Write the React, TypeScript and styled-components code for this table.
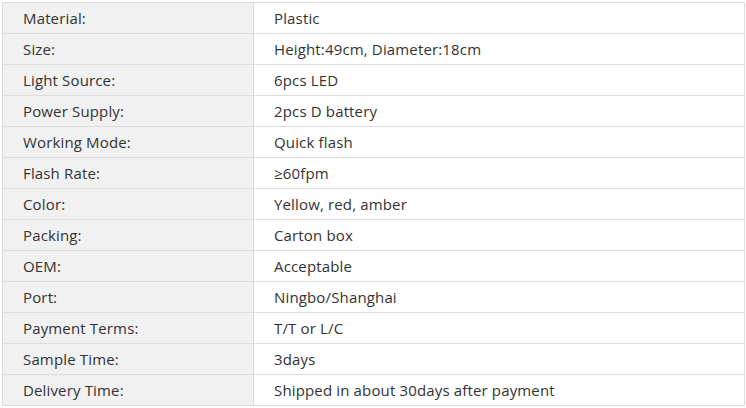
import React from "react";
import styled, { createGlobalStyle } from "styled-components";

const GlobalStyle = createGlobalStyle`
  body {
    margin: 0;
    background: #fff;
    font-family: "Open Sans", "Noto Sans", "Liberation Sans", sans-serif;
  }
`;

const Table = styled.div`
  margin: 2px 0 0 2px;
  width: 742px;
  border-top: 1px solid #dcdcdc;
  border-left: 1px solid #dcdcdc;
`;

const Row = styled.div`
  display: grid;
  grid-template-columns: 251px 1fr;
  height: 31px;
`;

const Cell = styled.div<{ $label?: boolean }>`
  display: flex;
  align-items: center;
  padding-left: 20px;
  background: ${(p) => (p.$label ? "#f1f1f1" : "#fff")};
  border-right: 1px solid #dcdcdc;
  border-bottom: 1px solid #dcdcdc;
  font-size: 15px;
  letter-spacing: 0.15px;
  color: #333;
  white-space: nowrap;
`;

const specs: [string, string][] = [
  ["Material:", "Plastic"],
  ["Size:", "Height:49cm, Diameter:18cm"],
  ["Light Source:", "6pcs LED"],
  ["Power Supply:", "2pcs D battery"],
  ["Working Mode:", "Quick flash"],
  ["Flash Rate:", "≥60fpm"],
  ["Color:", "Yellow, red, amber"],
  ["Packing:", "Carton box"],
  ["OEM:", "Acceptable"],
  ["Port:", "Ningbo/Shanghai"],
  ["Payment Terms:", "T/T or L/C"],
  ["Sample Time:", "3days"],
  ["Delivery Time:", "Shipped in about 30days after payment"],
];

export default function App() {
  return (
    <>
      <GlobalStyle />
      <Table>
        {specs.map(([k, v]) => (
          <Row key={k}>
            <Cell $label>{k}</Cell>
            <Cell>{v}</Cell>
          </Row>
        ))}
      </Table>
    </>
  );
}
